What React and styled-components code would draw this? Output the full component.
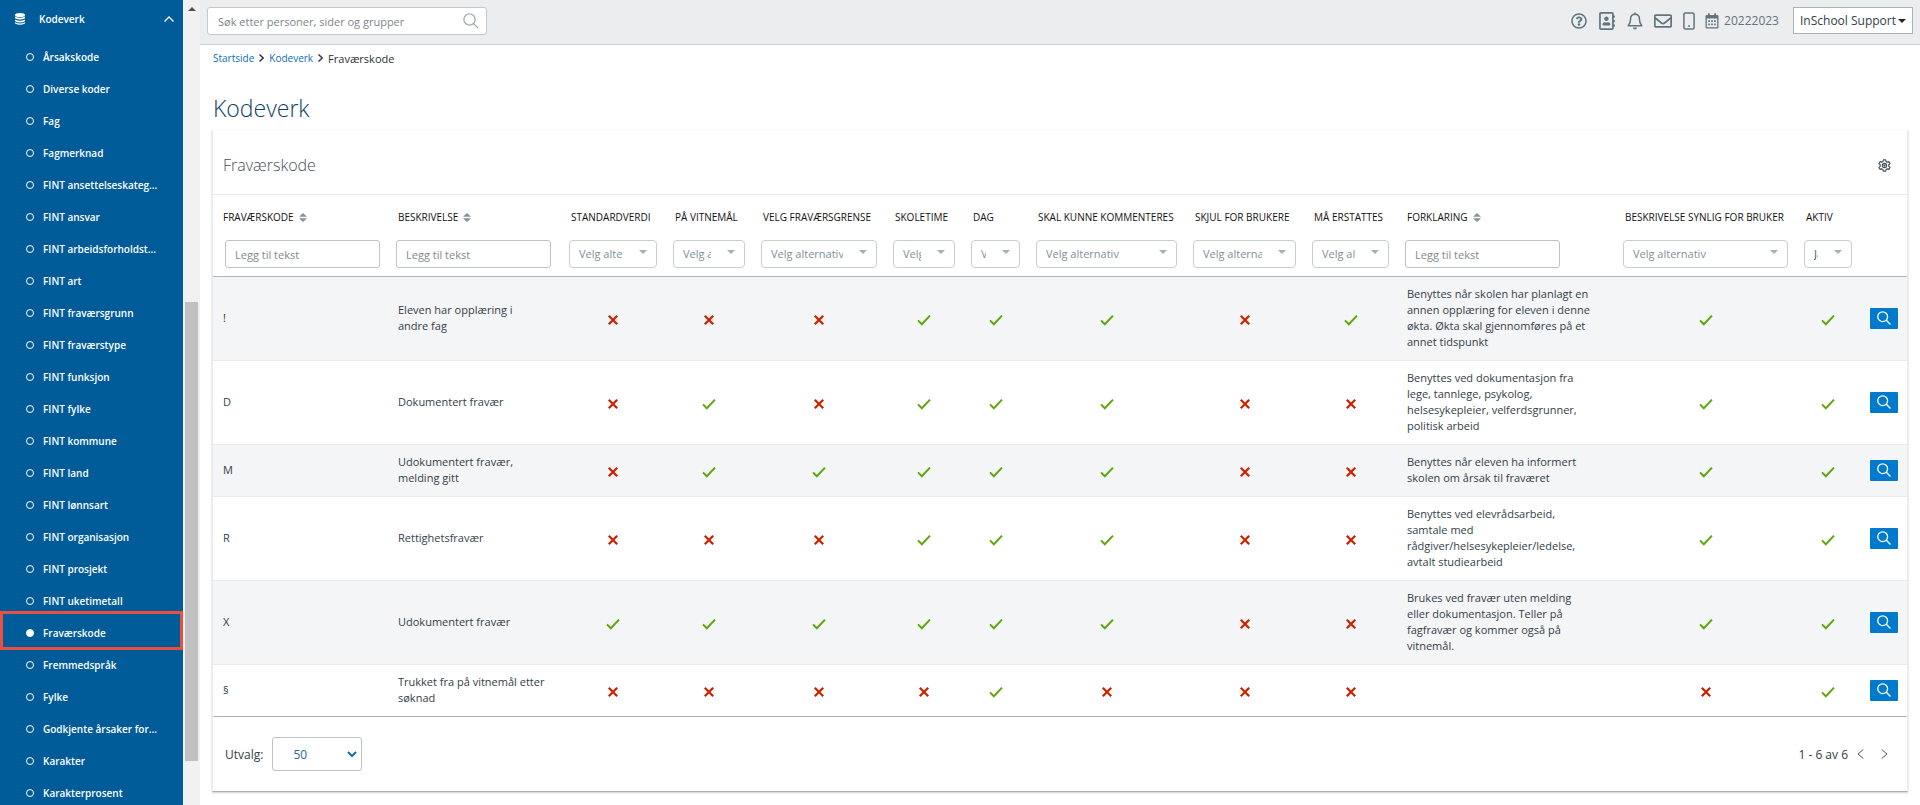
import React from "react";
import styled, { createGlobalStyle, css } from "styled-components";
import { FaRegQuestionCircle, FaRegAddressBook, FaRegEnvelope } from "react-icons/fa";

const Global = createGlobalStyle`
  * { box-sizing: border-box; }
  html, body { margin: 0; height: 100%; }
  #root { height: 100%; }
  body { font-family: "Open Sans", "Noto Sans", sans-serif; font-size: 11px; color: #333e48; background: #fff; }
  input, select, button { font-family: inherit; }
`;

const Layout = styled.div`
  display: flex;
  height: 100vh;
  overflow: hidden;
`;

const Sidebar = styled.nav`
  flex: none;
  width: 183px;
  overflow: hidden;
  background: #005b99;
  color: #fff;
  font-size: 10px;
  font-weight: 600;
`;

const GroupToggle = styled.button`
  display: flex;
  align-items: center;
  width: 100%;
  height: 38px;
  margin-bottom: 3px;
  padding: 0 9px 0 14px;
  border: 0;
  background: none;
  color: inherit;
  font-size: 10px;
  font-weight: 600;
`;

const GroupName = styled.span`
  flex: 1;
  margin-left: 13px;
  text-align: left;
`;

const MenuList = styled.ul`
  margin: 0;
  padding: 0;
  list-style: none;
`;

const MenuItem = styled.li`
  position: relative;
  ${(p) =>
    p.$active &&
    css`
      &::after {
        content: "";
        position: absolute;
        inset: -6px 0 -1px;
        border: 3px solid #ea4f40;
        pointer-events: none;
      }
    `}
`;

const MenuLink = styled.a`
  display: flex;
  align-items: center;
  gap: 9px;
  height: 32px;
  padding-left: 26px;
  color: #fff;
  text-decoration: none;
  white-space: nowrap;
`;

const Bullet = styled.span`
  width: 8px;
  height: 8px;
  border: 1px solid #fff;
  border-radius: 50%;
  background: ${(p) => (p.$filled ? "#fff" : "transparent")};
`;

const ScrollTrack = styled.div`
  display: flex;
  flex-direction: column;
  align-items: center;
  flex: none;
  width: 17px;
  background: #f1f1f1;
`;

const ScrollArrow = styled.span`
  margin-top: 7px;
  border: 4px solid transparent;
  border-top: 0;
  border-bottom-color: #505050;
`;

const ScrollThumb = styled.span`
  width: 13px;
  height: 57%;
  margin-top: 291px;
  background: #c1c1c1;
`;

const Main = styled.div`
  flex: 1;
  min-width: 0;
`;

const TopBar = styled.header`
  display: flex;
  align-items: flex-start;
  justify-content: space-between;
  height: 45px;
  padding: 7px;
  border-bottom: 1px solid #cdd2d5;
  background: #ecedef;
`;

const SearchBox = styled.label`
  display: flex;
  align-items: center;
  width: 280px;
  height: 28px;
  padding: 0 7px 0 10px;
  border: 1px solid #c3c9cc;
  border-radius: 3px;
  background: #fff;
`;

const SearchInput = styled.input`
  flex: 1;
  min-width: 0;
  padding: 0;
  border: 0;
  outline: 0;
  background: none;
  font-size: 11px;
  &::placeholder { color: #7d868b; opacity: 1; }
`;

const Tools = styled.div`
  display: flex;
  align-items: center;
  height: 27px;
  color: #5f7580;
`;

const ToolButton = styled.button`
  display: flex;
  align-items: center;
  justify-content: center;
  width: ${(p) => (p.$narrow ? "24px" : "28px")};
  height: 27px;
  padding: 0;
  border: 0;
  background: none;
  color: inherit;
`;

const YearButton = styled.button`
  display: flex;
  align-items: center;
  gap: 5px;
  margin: 0 14px 0 4px;
  padding: 0;
  border: 0;
  background: none;
  color: inherit;
  font-size: 12px;
`;

const AccountButton = styled.button`
  display: flex;
  align-items: center;
  gap: 2px;
  height: 27px;
  padding: 0 6px;
  border: 1px solid #a9b4ba;
  background: #fff;
  color: #333e48;
  font-size: 12px;
`;

const Caret = styled.span`
  border: 4px solid transparent;
  border-bottom: 0;
  border-top-color: #222;
`;

const Content = styled.main`
  padding: 5px 12px 0;
`;

const Breadcrumb = styled.nav`
  display: flex;
  align-items: center;
  gap: 5px;
  height: 16px;
  padding-left: 1px;
  color: #2a3338;
  font-size: 11px;
`;

const Crumb = styled.a`
  color: #0a6fb8;
  font-size: 10px;
  text-decoration: none;
`;

const PageTitle = styled.h1`
  margin: 26px 0 6px;
  padding-left: 1px;
  color: #0f3f66;
  font-size: 23px;
  font-weight: 300;
  line-height: 32px;
`;

const Card = styled.section`
  border: solid #e8eaec;
  border-width: 0 1px;
  border-bottom: 1px solid #a9adb0;
  box-shadow: 0 1px 2px rgba(0, 0, 0, 0.2);
`;

const CardHeader = styled.header`
  display: flex;
  align-items: center;
  justify-content: space-between;
  height: 65px;
  padding: 6px 16px 0 10px;
  border-bottom: 1px solid #e8eaec;
`;

const CardTitle = styled.h2`
  margin: 0;
  color: #46525a;
  font-size: 16px;
  font-weight: 300;
`;

const IconButton = styled.button`
  display: flex;
  padding: 0;
  border: 0;
  background: none;
  color: #4b565d;
`;

const Table = styled.table`
  width: 100%;
  border-collapse: separate;
  border-spacing: 0;
  table-layout: fixed;
`;

const HeadCell = styled.th`
  height: 45px;
  padding: 0 0 2px 10px;
  color: #111;
  font-size: 10px;
  font-weight: 500;
  text-align: left;
  text-transform: uppercase;
  white-space: nowrap;
`;

const SortIcon = styled.svg`
  margin-left: 5px;
  vertical-align: -1px;
  fill: #85929a;
`;

const FilterCell = styled.td`
  height: 37px;
  padding: 0 8px 8px;
  border-bottom: 1px solid #adb6bb;
  &:first-child { padding-left: 12px; }
`;

const TextFilter = styled.input`
  display: block;
  width: 155px;
  height: 28px;
  padding: 0 9px;
  border: 1px solid #bcc2c6;
  border-radius: 3px;
  font-size: 11px;
  &::placeholder { color: #82898d; opacity: 1; }
`;

const SelectWrap = styled.div`
  position: relative;
  &::after {
    content: "";
    position: absolute;
    top: 10px;
    right: 10px;
    border: 4px solid transparent;
    border-bottom: 0;
    border-top-color: #a6aeb3;
    pointer-events: none;
  }
`;

const SelectFilter = styled.select`
  display: block;
  width: 100%;
  height: 28px;
  padding: 0 33px 2px 9px;
  border: 1px solid #c8cdd0;
  border-radius: 4px;
  appearance: none;
  background: #fff;
  color: ${(p) => (p.$chosen ? "#2d6184" : "#7f8f98")};
  font-size: 11px;
`;

const BodyRow = styled.tr`
  &:nth-child(odd) { background: #f3f5f7; }
  &:last-child td { border-bottom-color: #adb6bb; }
`;

const Cell = styled.td`
  padding: 9px 8px 10px 10px;
  border-bottom: 1px solid #e9ebed;
  font-size: 11px;
  line-height: 16px;
  vertical-align: middle;
  white-space: pre-line;
`;

const CenterCell = styled(Cell)`
  padding: 9px;
  text-align: center;
  & > svg { vertical-align: middle; }
`;

const ViewButton = styled.button`
  display: flex;
  align-items: center;
  justify-content: center;
  width: 28px;
  height: 21px;
  padding: 0;
  border: 0;
  border-radius: 1px;
  background: #007acc;
  color: #fff;
`;

const CardFooter = styled.footer`
  display: flex;
  align-items: center;
  justify-content: space-between;
  height: 74px;
  padding: 0 19px 0 12px;
  font-size: 12px;
`;

const PageSize = styled.label`
  display: flex;
  align-items: center;
  gap: 9px;
`;

const PageSizeWrap = styled.span`
  position: relative;
  & > svg {
    position: absolute;
    top: 14px;
    right: 5px;
    pointer-events: none;
  }
`;

const PageSizeSelect = styled.select`
  display: block;
  width: 90px;
  height: 34px;
  padding: 0 20px;
  border: 1px solid #bcc2c6;
  border-radius: 3px;
  appearance: none;
  background: #fff;
  color: #1f6a9c;
  font-size: 12px;
`;

const Pager = styled.div`
  display: flex;
  align-items: center;
  gap: 9px;
`;

const PagerButtons = styled.div`
  display: flex;
  gap: 17px;
`;

const Chevron = ({ points, width, height, color = "currentColor", stroke = 1 }) => (
  <svg width={width} height={height} fill="none" stroke={color} strokeWidth={stroke} aria-hidden="true">
    <polyline points={points} />
  </svg>
);

const Magnifier = ({ size, stroke, color }) => (
  <svg width={size} height={size} viewBox="0 0 16 16" fill="none" stroke={color} strokeWidth={stroke} aria-hidden="true">
    <circle cx="6.5" cy="6.5" r="5.6" />
    <path d="M10.6 10.6L15.4 15.4" />
  </svg>
);

const Check = () => (
  <svg width="14" height="12" viewBox="0 0 14 12" fill="none" stroke="#5fa60c" strokeWidth="2" role="img" aria-label="Ja">
    <path d="M1 6.4L4.8 10.2L13 1.6" />
  </svg>
);

const Cross = () => (
  <svg width="12" height="12" viewBox="0 0 12 12" fill="none" stroke="#cc2200" strokeWidth="2.3" role="img" aria-label="Nei">
    <path d="M1.8 1.8L10.2 10.2M10.2 1.8L1.8 10.2" />
  </svg>
);

const Bell = () => (
  <svg width="16" height="18" viewBox="0 0 16 18" fill="none" stroke="currentColor" strokeWidth="1.5" strokeLinejoin="round">
    <path d="M8 2.2C5 2.2 3.6 4.5 3.6 7C3.6 10.5 2.6 11.8 1.2 13.8H14.8C13.4 11.8 12.4 10.5 12.4 7C12.4 4.5 11 2.2 8 2.2Z" />
    <path d="M8 0.4V2.2" />
    <path d="M6 15.6H10A2 2 0 0 1 6 15.6Z" fill="currentColor" stroke="none" />
  </svg>
);

const Mobile = () => (
  <svg width="12" height="18" viewBox="0 0 12 18" fill="none" stroke="currentColor" strokeWidth="1.5">
    <rect x="0.9" y="0.9" width="10.2" height="16.2" rx="1.6" />
    <rect x="5.2" y="13.2" width="1.6" height="1.8" fill="currentColor" stroke="none" />
  </svg>
);

const Calendar = () => (
  <svg width="14" height="16" viewBox="0 0 14 16" fill="currentColor">
    <path fillRule="evenodd" d="M1.5 2H12.5Q13.5 2 13.5 3V14.5Q13.5 15.5 12.5 15.5H1.5Q0.5 15.5 0.5 14.5V3Q0.5 2 1.5 2ZM1.8 5.6V14.2H12.200V5.6Z" />
    <path d="M3 0.2H4.8V3H3ZM9.2 0.2H11V3H9.2Z" />
    <path d="M3.2 7.2h1.700v1.700h-1.700zM6.150 7.2h1.700v1.700h-1.700zM9.100 7.2h1.700v1.700h-1.700zM3.2 10.6h1.700v1.700h-1.700zM6.150 10.6h1.700v1.700h-1.700zM9.100 10.6h1.700v1.700h-1.700z" />
  </svg>
);

const Database = () => (
  <svg width="12" height="12" viewBox="0 0 12 12" fill="#fff" aria-hidden="true">
    <ellipse cx="6" cy="2" rx="5" ry="2" />
    <path d="M1 3.4Q6 6 11 3.4V5.2Q6 7.6 1 5.2ZM1 6.4Q6 9 11 6.4V8.2Q6 10.6 1 8.2ZM1 9.3Q6 11.7 11 9.3V10.5Q6 13.2 1 10.5Z" />
  </svg>
);

const Gear = () => (
  <svg width="13" height="13" viewBox="0 0 24 24" fill="none" stroke="currentColor" strokeWidth="2.2" strokeLinejoin="round">
    <path d="M9.8 1.5h4.4l.7 3.1 2.1 1.2 3-1 2.2 3.8-2.3 2.1v2.6l2.3 2.1-2.2 3.8-3-1-2.1 1.2-.7 3.1H9.8l-.7-3.1-2.1-1.2-3 1-2.2-3.8 2.3-2.1v-2.6L1.800 8.600 4 4.800l3 1 2.100-1.200z" />
    <circle cx="12" cy="12" r="4" />
    <circle cx="12" cy="12" r="1" />
  </svg>
);

const menu = [
  "Årsakskode", "Diverse koder", "Fag", "Fagmerknad", "FINT ansettelseskateg...", "FINT ansvar",
  "FINT arbeidsforholdst...", "FINT art", "FINT fraværsgrunn", "FINT fraværstype", "FINT funksjon",
  "FINT fylke", "FINT kommune", "FINT land", "FINT lønnsart", "FINT organisasjon", "FINT prosjekt",
  "FINT uketimetall", "Fraværskode", "Fremmedspråk", "Fylke", "Godkjente årsaker for...", "Karakter",
  "Karakterprosent",
];

const columns = [
  { title: "Fraværskode", width: 175, text: true },
  { title: "Beskrivelse", width: 173, text: true },
  { title: "Standardverdi", width: 104 },
  { title: "På vitnemål", width: 88 },
  { title: "Velg fraværsgrense", width: 132 },
  { title: "Skoletime", width: 78 },
  { title: "Dag", width: 65 },
  { title: "Skal kunne kommenteres", width: 157 },
  { title: "Skjul for brukere", width: 119 },
  { title: "Må erstattes", width: 93 },
  { title: "Forklaring", width: 218, text: true },
  { title: "Beskrivelse synlig for bruker", width: 181 },
  { title: "Aktiv", width: 64, value: "Ja" },
];

const rows = [
  { code: "!", name: "Eleven har opplæring i\nandre fag", flags: [0, 0, 0, 1, 1, 1, 0, 1], note: "Benyttes når skolen har planlagt en\nannen opplæring for eleven i denne\nøkta. Økta skal gjennomføres på et\nannet tidspunkt", visible: 1, active: 1 },
  { code: "D", name: "Dokumentert fravær", flags: [0, 1, 0, 1, 1, 1, 0, 0], note: "Benyttes ved dokumentasjon fra\nlege, tannlege, psykolog,\nhelsesykepleier, velferdsgrunner,\npolitisk arbeid", visible: 1, active: 1 },
  { code: "M", name: "Udokumentert fravær,\nmelding gitt", flags: [0, 1, 1, 1, 1, 1, 0, 0], note: "Benyttes når eleven ha informert\nskolen om årsak til fraværet", visible: 1, active: 1 },
  { code: "R", name: "Rettighetsfravær", flags: [0, 0, 0, 1, 1, 1, 0, 0], note: "Benyttes ved elevrådsarbeid,\nsamtale med\nrådgiver/helsesykepleier/ledelse,\navtalt studiearbeid", visible: 1, active: 1 },
  { code: "X", name: "Udokumentert fravær", flags: [1, 1, 1, 1, 1, 1, 0, 0], note: "Brukes ved fravær uten melding\neller dokumentasjon. Teller på\nfagfravær og kommer også på\nvitnemål.", visible: 1, active: 1 },
  { code: "§", name: "Trukket fra på vitnemål etter\nsøknad", flags: [0, 0, 0, 0, 1, 0, 0, 0], note: "", visible: 0, active: 1 },
];

const FlagCell = ({ on }) => <CenterCell>{on ? <Check /> : <Cross />}</CenterCell>;

export default function App() {
  return (
    <>
      <Global />
      <Layout>
        <Sidebar aria-label="Meny">
          <GroupToggle type="button" aria-expanded="true">
            <Database />
            <GroupName>Kodeverk</GroupName>
            <Chevron width={10} height={6} points="0.5,5.5 5,1 9.5,5.5" stroke={1.3} />
          </GroupToggle>
          <MenuList>
            {menu.map((name) => {
              const active = name === "Fraværskode";
              return (
                <MenuItem key={name} $active={active}>
                  <MenuLink href="#" aria-current={active ? "page" : undefined}>
                    <Bullet $filled={active} />
                    {name}
                  </MenuLink>
                </MenuItem>
              );
            })}
          </MenuList>
        </Sidebar>
        <ScrollTrack aria-hidden="true">
          <ScrollArrow />
          <ScrollThumb />
        </ScrollTrack>
        <Main>
          <TopBar>
            <SearchBox>
              <SearchInput type="search" aria-label="Søk" placeholder="Søk etter personer, sider og grupper" />
              <Magnifier size={16} stroke={1.3} color="#a3abb0" />
            </SearchBox>
            <Tools>
              <ToolButton type="button" aria-label="Hjelp"><FaRegQuestionCircle size={16} /></ToolButton>
              <ToolButton type="button" aria-label="Kontakter"><FaRegAddressBook size={18} /></ToolButton>
              <ToolButton type="button" aria-label="Varsler"><Bell /></ToolButton>
              <ToolButton type="button" aria-label="Meldinger"><FaRegEnvelope size={18} /></ToolButton>
              <ToolButton type="button" aria-label="Mobil" $narrow><Mobile /></ToolButton>
              <YearButton type="button"><Calendar />20222023</YearButton>
              <AccountButton type="button">InSchool Support<Caret /></AccountButton>
            </Tools>
          </TopBar>
          <Content>
            <Breadcrumb aria-label="Brødsmuler">
              <Crumb href="#">Startside</Crumb>
              <Chevron width={5} height={8} points="0.5,0.5 4.2,4 0.5,7.5" stroke={1.4} />
              <Crumb href="#">Kodeverk</Crumb>
              <Chevron width={5} height={8} points="0.5,0.5 4.2,4 0.5,7.5" stroke={1.4} />
              <span>Fraværskode</span>
            </Breadcrumb>
            <PageTitle>Kodeverk</PageTitle>
            <Card>
              <CardHeader>
                <CardTitle>Fraværskode</CardTitle>
                <IconButton type="button" aria-label="Innstillinger"><Gear /></IconButton>
              </CardHeader>
              <Table>
                <colgroup>
                  {columns.map((c) => <col key={c.title} width={c.width} />)}
                  <col width={47} />
                </colgroup>
                <thead>
                  <tr>
                    {columns.map((c) => (
                      <HeadCell key={c.title} scope="col">
                        {c.title}
                        {c.text && (
                          <SortIcon width="8" height="9" viewBox="0 0 8 9">
                            <path d="M4 0L8 3.8H0ZM4 9L0 5.2H8Z" />
                          </SortIcon>
                        )}
                      </HeadCell>
                    ))}
                    <HeadCell as="td" />
                  </tr>
                  <tr>
                    {columns.map((c) => (
                      <FilterCell key={c.title}>
                        {c.text ? (
                          <TextFilter type="text" aria-label={c.title} placeholder="Legg til tekst" />
                        ) : (
                          <SelectWrap>
                            <SelectFilter aria-label={c.title} $chosen={!!c.value}>
                              <option>{c.value || "Velg alternativ"}</option>
                            </SelectFilter>
                          </SelectWrap>
                        )}
                      </FilterCell>
                    ))}
                    <FilterCell />
                  </tr>
                </thead>
                <tbody>
                  {rows.map((r) => (
                    <BodyRow key={r.code}>
                      <Cell>{r.code}</Cell>
                      <Cell>{r.name}</Cell>
                      {r.flags.map((f, i) => <FlagCell key={i} on={f} />)}
                      <Cell>{r.note}</Cell>
                      <FlagCell on={r.visible} />
                      <FlagCell on={r.active} />
                      <Cell>
                        <ViewButton type="button" aria-label={"Vis " + r.code}>
                          <Magnifier size={14} stroke={1.5} color="#fff" />
                        </ViewButton>
                      </Cell>
                    </BodyRow>
                  ))}
                </tbody>
              </Table>
              <CardFooter>
                <PageSize>
                  Utvalg:
                  <PageSizeWrap>
                    <PageSizeSelect defaultValue="50">
                      <option>50</option>
                    </PageSizeSelect>
                    <Chevron width={10} height={7} points="1,1 5,5 9,1" color="#1f6a9c" stroke={2} />
                  </PageSizeWrap>
                </PageSize>
                <Pager>
                  <span>1 - 6 av 6</span>
                  <PagerButtons>
                    <IconButton type="button" aria-label="Forrige side">
                      <Chevron width={7} height={10} points="6.3,0.5 1,5 6.3,9.5" />
                    </IconButton>
                    <IconButton type="button" aria-label="Neste side">
                      <Chevron width={7} height={10} points="0.7,0.5 6,5 0.7,9.5" />
                    </IconButton>
                  </PagerButtons>
                </Pager>
              </CardFooter>
            </Card>
          </Content>
        </Main>
      </Layout>
    </>
  );
}
